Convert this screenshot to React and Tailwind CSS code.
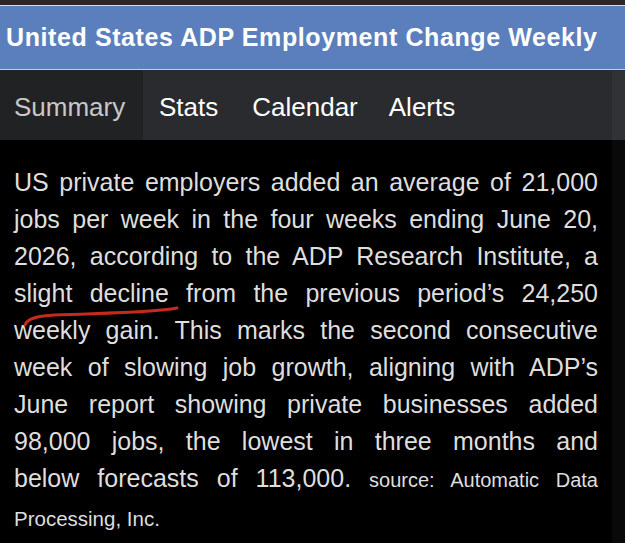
export default function App() {
  const lines = [
    "US private employers added an average of 21,000",
    "jobs per week in the four weeks ending June 20,",
    "2026, according to the ADP Research Institute, a",
    "slight decline from the previous period’s 24,250",
    "weekly gain. This marks the second consecutive",
    "week of slowing job growth, aligning with ADP’s",
    "June report showing private businesses added",
    "98,000 jobs, the lowest in three months and",
  ];
  return (
    <div
      className="relative w-[625px] h-[543px] overflow-hidden bg-black"
      style={{ fontFamily: '"Liberation Sans", Arial, sans-serif' }}
    >
      <div className="h-[5px] bg-[#2b2727]" />
      <div className="h-px bg-[#dcdcdc]" />
      <div className="h-[63px] bg-[#5b7fbd] flex items-center pl-[6px] pt-px text-white font-bold text-[25px] tracking-[0.6px]">
        United States ADP Employment Change Weekly
      </div>
      <div className="h-px bg-[#c9d0da]" />
      <div className="h-[70px] bg-[#2a2b2e] flex text-[26px] text-white">
        <div className="w-[143px] bg-[#212224] flex items-center pl-[14px] pt-[5px] text-[#c8c8c8]">Summary</div>
        <div className="flex items-center pl-[16px] pt-[5px]">Stats</div>
        <div className="flex items-center pl-[34px] pt-[5px]">Calendar</div>
        <div className="flex items-center pl-[31px] pt-[5px]">Alerts</div>
      </div>
      <div className="pl-[14px] pr-[27px] pt-[24px] text-[25px] leading-[37px] text-[#dedede]">
        {lines.map((l) => (
          <div key={l} className="text-justify [text-align-last:justify] whitespace-nowrap">
            {l}
          </div>
        ))}
        <div className="text-justify [text-align-last:justify] whitespace-nowrap">
          below forecasts of 113,000. <span className="text-[20px]">source: Automatic Data</span>
        </div>
        <div className="text-[20.5px] leading-[40px]">Processing, Inc.</div>
      </div>
      <svg className="absolute left-0 top-0" width="625" height="543" viewBox="0 0 625 543">
        <path
          d="M25 325 C27 319 35 316 55 315 C100 313 150 313 177 308"
          fill="none"
          stroke="#c62a1f"
          strokeWidth="3"
          strokeLinecap="round"
        />
      </svg>
      <div className="absolute right-0 top-[71px] bottom-0 w-[13px] bg-white/[0.035]" />
    </div>
  );
}
